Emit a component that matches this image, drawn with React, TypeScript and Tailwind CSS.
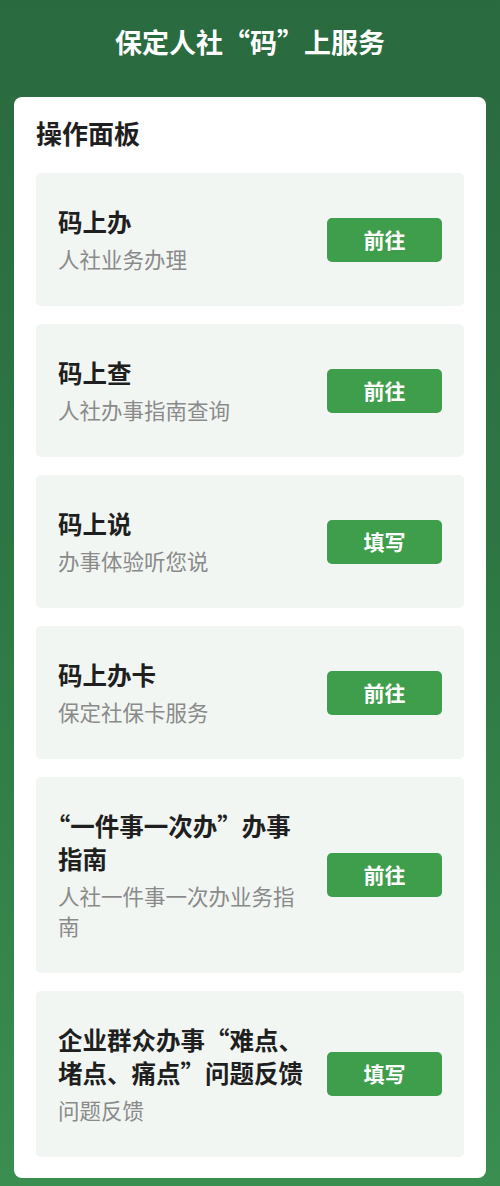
const items = [
  { title: "码上办", desc: "人社业务办理", action: "前往" },
  { title: "码上查", desc: "人社办事指南查询", action: "前往" },
  { title: "码上说", desc: "办事体验听您说", action: "填写" },
  { title: "码上办卡", desc: "保定社保卡服务", action: "前往" },
  { title: "“一件事一次办”办事指南", desc: "人社一件事一次办业务指南", action: "前往" },
  { title: "企业群众办事“难点、堵点、痛点”问题反馈", desc: "问题反馈", action: "填写" },
];

function ItemCard({ title, desc, action }: { title: string; desc: string; action: string }) {
  return (
    <div className="flex items-center gap-5 rounded-[5px] bg-[#f1f6f2] px-[22px] py-8">
      <div className="min-w-0 flex-1">
        <div className="text-[24.5px] font-bold leading-[33px] text-[#1f1f1f] [text-spacing-trim:trim-start]">
          {title}
        </div>
        <div className="mt-1.5 text-[21.5px] leading-[30px] text-[#8a8a8a]">{desc}</div>
      </div>
      <button className="h-[44px] w-[115px] shrink-0 rounded-[5px] bg-[#3f9e4c] text-[21px] font-bold text-white">
        {action}
      </button>
    </div>
  );
}

export default function App() {
  return (
    <div
      className="min-h-[1186px] bg-gradient-to-b from-[#2a6a3f] via-[#2e7844] to-[#3a8e50] px-[14px] pb-2 pt-6"
      style={{ fontFamily: '"Noto Sans CJK SC", "Noto Sans", sans-serif' }}
    >
      <h1 className="mb-[37px] text-center text-[27px] font-bold leading-9 text-white">
        保定人社“码”上服务
      </h1>

      <div className="rounded-lg bg-white px-[22px] pb-[21px] pt-5">
        <h2 className="mb-6 text-[26px] font-bold leading-8 text-[#1f1f1f]">操作面板</h2>
        <div className="flex flex-col gap-[18px]">
          {items.map((it) => (
            <ItemCard key={it.title} {...it} />
          ))}
        </div>
      </div>
    </div>
  );
}
